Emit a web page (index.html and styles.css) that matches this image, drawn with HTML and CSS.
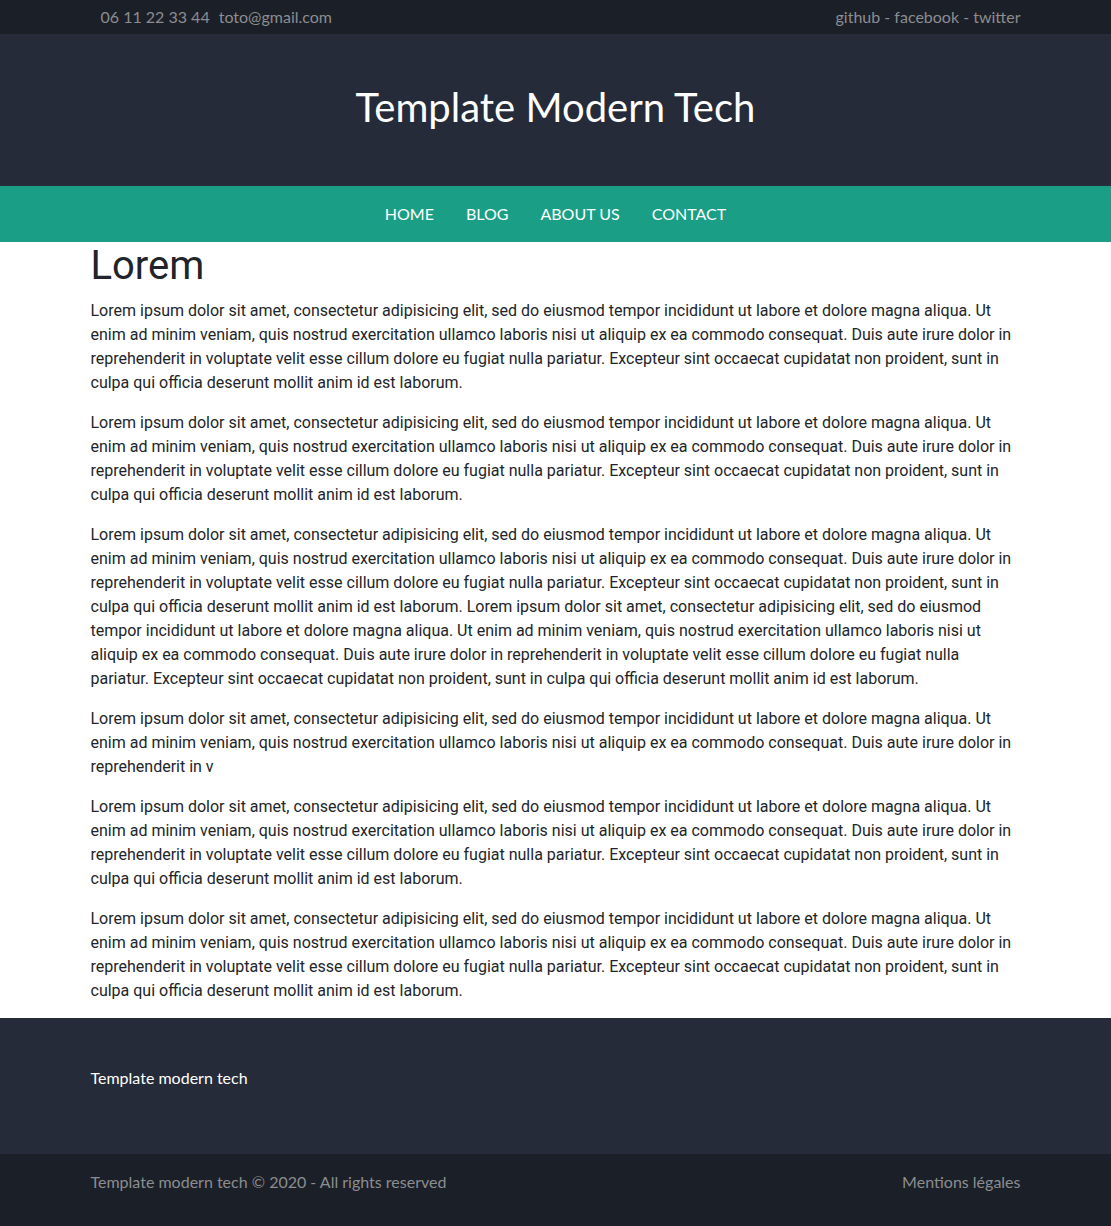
FILE: index.html
```html
<!DOCTYPE html>
<html lang="fr">
<head>
<meta charset="utf-8">
<title>Template Modern Tech</title>
<link rel="stylesheet" href="styles.css">
</head>
<body>
<div class="topbar">
  <div class="container topbar-inner">
    <div class="contact"><span class="phone">06 11 22 33 44</span><span class="mail">toto@gmail.com</span></div>
    <div class="social">github - facebook - twitter</div>
  </div>
</div>
<header class="header">
  <h1 class="site-title">Template Modern Tech</h1>
</header>
<nav class="nav">
  <a href="#">HOME</a>
  <a href="#">BLOG</a>
  <a href="#">ABOUT US</a>
  <a href="#">CONTACT</a>
</nav>
<main class="container main">
  <h2 class="page-title">Lorem</h2>
  <p>Lorem ipsum dolor sit amet, consectetur adipisicing elit, sed do eiusmod tempor incididunt ut labore et dolore magna aliqua. Ut enim ad minim veniam, quis nostrud exercitation ullamco laboris nisi ut aliquip ex ea commodo consequat. Duis aute irure dolor in reprehenderit in voluptate velit esse cillum dolore eu fugiat nulla pariatur. Excepteur sint occaecat cupidatat non proident, sunt in culpa qui officia deserunt mollit anim id est laborum.</p>
  <p>Lorem ipsum dolor sit amet, consectetur adipisicing elit, sed do eiusmod tempor incididunt ut labore et dolore magna aliqua. Ut enim ad minim veniam, quis nostrud exercitation ullamco laboris nisi ut aliquip ex ea commodo consequat. Duis aute irure dolor in reprehenderit in voluptate velit esse cillum dolore eu fugiat nulla pariatur. Excepteur sint occaecat cupidatat non proident, sunt in culpa qui officia deserunt mollit anim id est laborum.</p>
  <p>Lorem ipsum dolor sit amet, consectetur adipisicing elit, sed do eiusmod tempor incididunt ut labore et dolore magna aliqua. Ut enim ad minim veniam, quis nostrud exercitation ullamco laboris nisi ut aliquip ex ea commodo consequat. Duis aute irure dolor in reprehenderit in voluptate velit esse cillum dolore eu fugiat nulla pariatur. Excepteur sint occaecat cupidatat non proident, sunt in culpa qui officia deserunt mollit anim id est laborum. Lorem ipsum dolor sit amet, consectetur adipisicing elit, sed do eiusmod tempor incididunt ut labore et dolore magna aliqua. Ut enim ad minim veniam, quis nostrud exercitation ullamco laboris nisi ut aliquip ex ea commodo consequat. Duis aute irure dolor in reprehenderit in voluptate velit esse cillum dolore eu fugiat nulla pariatur. Excepteur sint occaecat cupidatat non proident, sunt in culpa qui officia deserunt mollit anim id est laborum.</p>
  <p>Lorem ipsum dolor sit amet, consectetur adipisicing elit, sed do eiusmod tempor incididunt ut labore et dolore magna aliqua. Ut enim ad minim veniam, quis nostrud exercitation ullamco laboris nisi ut aliquip ex ea commodo consequat. Duis aute irure dolor in reprehenderit in v</p>
  <p>Lorem ipsum dolor sit amet, consectetur adipisicing elit, sed do eiusmod tempor incididunt ut labore et dolore magna aliqua. Ut enim ad minim veniam, quis nostrud exercitation ullamco laboris nisi ut aliquip ex ea commodo consequat. Duis aute irure dolor in reprehenderit in voluptate velit esse cillum dolore eu fugiat nulla pariatur. Excepteur sint occaecat cupidatat non proident, sunt in culpa qui officia deserunt mollit anim id est laborum.</p>
  <p>Lorem ipsum dolor sit amet, consectetur adipisicing elit, sed do eiusmod tempor incididunt ut labore et dolore magna aliqua. Ut enim ad minim veniam, quis nostrud exercitation ullamco laboris nisi ut aliquip ex ea commodo consequat. Duis aute irure dolor in reprehenderit in voluptate velit esse cillum dolore eu fugiat nulla pariatur. Excepteur sint occaecat cupidatat non proident, sunt in culpa qui officia deserunt mollit anim id est laborum.</p>
</main>
<footer class="footer">
  <div class="container footer-inner">Template modern tech</div>
</footer>
<div class="bottombar">
  <div class="container bottombar-inner">
    <span>Template modern tech © 2020 - All rights reserved</span>
    <span>Mentions légales</span>
  </div>
</div>
</body>
</html>
```
FILE: styles.css
```css
* { box-sizing: border-box; }
html, body { margin: 0; padding: 0; }
body {
  font-family: Roboto, "Liberation Sans", sans-serif;
  font-size: 16px;
  line-height: 24px;
  color: #212529;
  background: #fff;
}
.container {
  width: 960px;
  margin: 0 auto;
  padding: 0 15px;
}
.topbar {
  background: #1b1f27;
  color: #8b8d90;
  font-family: Lato, sans-serif;
  font-size: 16px;
  height: 34px;
}
.topbar-inner {
  height: 34px;
  display: flex;
  justify-content: space-between;
  align-items: center;
}
.contact { padding-left: 10px; display: flex; gap: 9px; }
.header {
  background: #252b39;
  height: 152px;
  display: flex;
  align-items: center;
  justify-content: center;
  padding-bottom: 6px;
}
.site-title {
  margin: 0;
  font-family: Lato, sans-serif;
  font-weight: 400;
  font-size: 40px;
  line-height: 48px;
  color: #fff;
}
.nav {
  background: #1a9f86;
  height: 56px;
  display: flex;
  justify-content: center;
  align-items: center;
}
.nav a {
  font-family: Lato, sans-serif;
  font-size: 16px;
  color: #fff;
  text-decoration: none;
  padding: 0 16px;
}
.main { overflow: hidden; }
.page-title {
  margin: 0 0 9px;
  font-size: 40px;
  line-height: 48px;
  font-weight: 400;
  color: #212529;
}
.main p { margin: 0 0 16px; }
.main p:last-child { margin-bottom: 15px; }
.footer {
  background: #252b39;
  height: 136px;
  color: #fff;
  font-family: Lato, sans-serif;
  font-size: 16px;
}
.footer-inner {
  height: 100%;
  display: flex;
  align-items: center;
  padding-bottom: 16px;
}
.bottombar {
  background: #1b1f27;
  height: 72px;
  color: #8b8d90;
  font-family: Lato, sans-serif;
  font-size: 16px;
}
.bottombar-inner {
  height: 56px;
  display: flex;
  justify-content: space-between;
  align-items: center;
}
```
